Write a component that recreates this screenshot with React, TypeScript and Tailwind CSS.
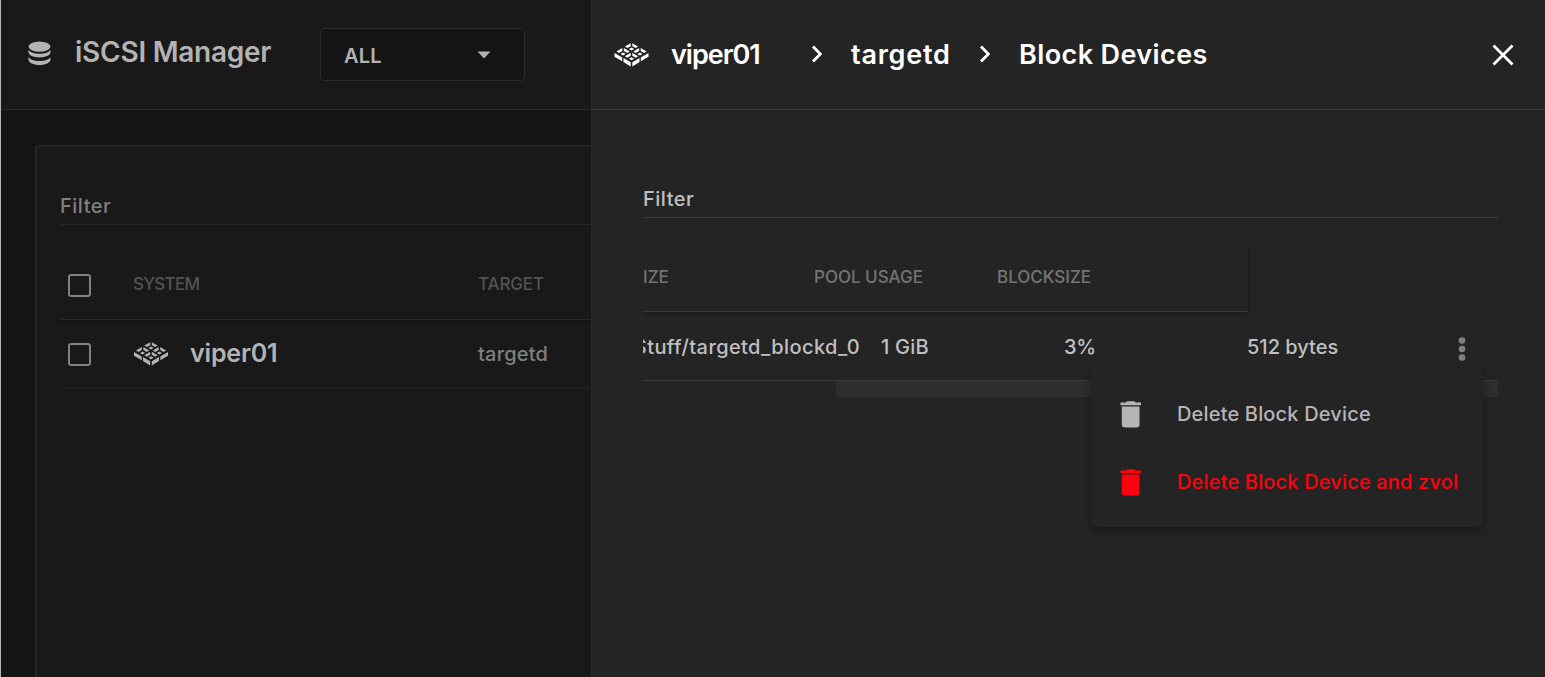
import React from "react";

type Pt = [number, number];
const poly = (pts: Pt[]) => pts.map((p) => p.join(",")).join(" ");

function SystemIcon({ className }: { className?: string }) {
  const cells: Pt[] = [[17, 0], [8.6, 4.8], [25.4, 4.8], [17, 9.6]];
  return (
    <svg viewBox="0 0 34 24" className={className} fill="currentColor">
      {cells.map(([x, y], i) => (
        <g key={i}>
          <polygon points={poly([[x - 0.8, y + 0.2], [x - 0.8, y + 3.2], [x - 4.2, y + 5.1], [x - 6.6, y + 3.6]])} />
          <polygon points={poly([[x + 0.8, y + 0.2], [x + 0.8, y + 3.2], [x + 4.2, y + 5.1], [x + 6.6, y + 3.6]])} />
          <polygon points={poly([[x, y + 4.6], [x + 2.6, y + 6.1], [x, y + 7.6], [x - 2.6, y + 6.1]])} />
        </g>
      ))}
      <polygon points="0,10 7.7,14.4 7.7,18.2 0,13.8" />
      <polygon points="9,15.100 16.200,19.300 16.200,23.500 9,19" />
      <polygon points="34,10 26.300,14.400 26.300,18.200 34,13.800" />
      <polygon points="25,15.100 17.800,19.300 17.800,23.500 25,19" />
    </svg>
  );
}

function DatabaseIcon() {
  return (
    <svg viewBox="0 0 23 25" className="h-[25px] w-[23px]" fill="currentColor">
      <ellipse cx="11.5" cy="5.6" rx="11" ry="5.2" />
      <path d="M.5 8.800C2 11.500 6.500 12.800 11.500 12.800S21 11.500 22.500 8.800V11.200C22.500 14.200 17.700 16.400 11.500 16.400S.5 14.200 .5 11.200Z" />
      <path d="M.5 16C2 18.700 6.500 20 11.500 20S21 18.700 22.500 16V18.500C22.500 21.600 17.700 24 11.500 24S.5 21.600 .5 18.500Z" />
    </svg>
  );
}

function TrashIcon() {
  return (
    <svg viewBox="0 0 22 27" className="mt-[3px] h-[27px] w-[22px] shrink-0" fill="currentColor">
      <path d="M.5 1.500H6L7 .3H14.500L15.500 1.500H21V4.300H.5Z" />
      <path d="M1.800 5.600H19.500V23.500A3 3 0 0 1 16.500 26.500H4.800A3 3 0 0 1 1.800 23.500Z" />
    </svg>
  );
}

function Chevron() {
  return (
    <svg viewBox="0 0 12 18" className="mb-px h-[18px] w-3 shrink-0" fill="none" stroke="currentColor" strokeWidth="2.800">
      <path d="M2 1.500 9.300 9 2 16.500" />
    </svg>
  );
}

const Checkbox = () => <span className="block size-[23px] rounded-[3px] border-[2.5px] border-[#808080]" />;

function Manager() {
  return (
    <section className="flex h-full w-[591px] shrink-0 flex-col overflow-hidden border-l border-[#b5b5b5] bg-[#141414] text-[#b3b3b3]">
      <header className="flex h-[110px] shrink-0 items-start border-b border-[#292929] bg-[#191919]">
        <div className="ml-[27px] mt-[41px]"><DatabaseIcon /></div>
        <h1 className="ml-6 mt-[32px] w-[245px] whitespace-nowrap text-[28px] font-semibold leading-[40px] tracking-[-0.25px]">iSCSI Manager</h1>
        <button className="mt-[28px] flex h-[53px] w-[205px] items-center justify-between rounded border border-[#292929] bg-[#141414] pl-[23px] pr-[33px] text-[20px] font-semibold tracking-[0.2px]">
          <span className="mt-[3px]">ALL</span>
          <svg viewBox="0 0 14 8" className="h-[8px] w-[14px]" fill="currentColor"><path d="M.5.500H13.500L7 7.500Z" /></svg>
        </button>
      </header>
      <div className="ml-[34px] mt-[35px] flex-1 rounded-tl border-l-2 border-t-2 border-[#252525] bg-[#191919] pl-[23px] pt-[42px]">
        <div className="h-[36px] border-b border-[#292929] text-[20px] font-medium leading-[34px] tracking-[0.5px] text-[#808080]">Filter</div>
        <div className="grid h-[95px] grid-cols-[74px_345px_1fr] items-center border-b border-[#292929] pt-[26px] text-[17px] font-medium text-[#535353] shadow-[0_3px_4px_-1px_rgba(0,0,0,0.3)]">
          <div className="pl-[8px]"><Checkbox /></div>
          <div className="-ml-px tracking-[-0.75px]">SYSTEM</div>
          <div className="-ml-px tracking-[-0.15px]">TARGET</div>
        </div>
        <div className="grid h-[68px] grid-cols-[74px_345px_1fr] items-center border-b border-[#232323]">
          <div className="pl-[8px] pt-[2px]"><Checkbox /></div>
          <div className="flex items-center gap-[22px] text-[25px] font-semibold tracking-[-0.15px]">
            <SystemIcon className="h-6 w-[34px]" />
            <span className="mt-px">viper01</span>
          </div>
          <div className="-ml-px text-[20px] font-medium tracking-[0.2px] text-[#808080]">targetd</div>
        </div>
      </div>
    </section>
  );
}

function ActionMenu() {
  return (
    <div className="absolute left-[499px] top-[367px] flex h-[160px] w-[392px] flex-col rounded-md bg-[#242424] pt-[12px] text-[20px] font-medium tracking-[0.17px] text-[#b5b5b5] shadow-[0_3px_10px_rgba(0,0,0,0.35)]">
      <div className="flex h-[68px] items-center whitespace-nowrap pl-[29px]">
        <TrashIcon />
        <span className="ml-[35px] mt-px">Delete Block Device</span>
      </div>
      <div className="flex h-[68px] items-center whitespace-nowrap pl-[29px] text-[#ff000d]">
        <TrashIcon />
        <span className="ml-[35px] mt-px">Delete Block Device and zvol</span>
      </div>
    </div>
  );
}

function BlockDevices() {
  return (
    <section className="relative flex h-full flex-1 flex-col border-l border-[#292929] bg-[#242424] text-[#c0c0c0]">
      <header className="flex h-[110px] shrink-0 items-center whitespace-nowrap border-b border-[#373737] pl-[22px] text-[27px] font-semibold text-white">
        <SystemIcon className="h-[24px] w-[35px]" />
        <span className="ml-[22px] mt-0.5 w-[140px] tracking-[-1px]">viper01</span>
        <Chevron />
        <span className="ml-[28px] mt-0.5 w-[128px] tracking-[0.75px]">targetd</span>
        <Chevron />
        <span className="ml-[28px] mt-0.5 tracking-[0.4px]">Block Devices</span>
        <svg viewBox="0 0 22 22" className="ml-auto mr-[31px] size-[22px]" fill="none" stroke="currentColor" strokeWidth="2.800"><path d="m1.500 1.500 19 19m0-19-19 19" /></svg>
      </header>
      <div className="ml-[51px] mr-[47px] mt-[72px]">
        <div className="h-[36px] border-b border-[#3a3a3a] text-[20px] font-medium leading-[34px] tracking-[0.5px]">Filter</div>
        <div className="mt-[25px] flex h-[69px] w-[605px] items-center border-b border-[#3a3a3a] pt-0.5 text-[17px] font-medium text-[#747474] shadow-[2px_3px_4px_-1px_rgba(0,0,0,0.3)]">
          <div className="w-[171px]">IZE</div>
          <div className="w-[183px]">POOL USAGE</div>
          <div>BLOCKSIZE</div>
        </div>
        <div className="flex h-[69px] items-center whitespace-nowrap border-b border-[#3a3a3a] pt-0.5 text-[20px] font-medium">
          <div className="flex w-[217px] justify-end overflow-hidden tracking-[0.4px]">Stuff/targetd_blockd_0</div>
          <div className="ml-[21px] w-[183px] tracking-[0.2px]">1 GiB</div>
          <div className="w-[183px] tracking-[-0.3px]">3%</div>
          <div>512 bytes</div>
          <svg viewBox="0 0 8 24" className="ml-auto mr-[32px] mt-[3px] h-6 w-2" fill="#808080"><circle cx="4" cy="3.500" r="3.300" /><circle cx="4" cy="12" r="3.300" /><circle cx="4" cy="20.500" r="3.300" /></svg>
        </div>
        <div className="ml-auto h-4 w-[662px] bg-[#2e2e2e]" />
      </div>
      <ActionMenu />
    </section>
  );
}

export default function App() {
  return (
    <main className="flex h-[677px] w-[1545px] overflow-hidden font-['Inter',sans-serif]">
      <Manager />
      <BlockDevices />
    </main>
  );
}
